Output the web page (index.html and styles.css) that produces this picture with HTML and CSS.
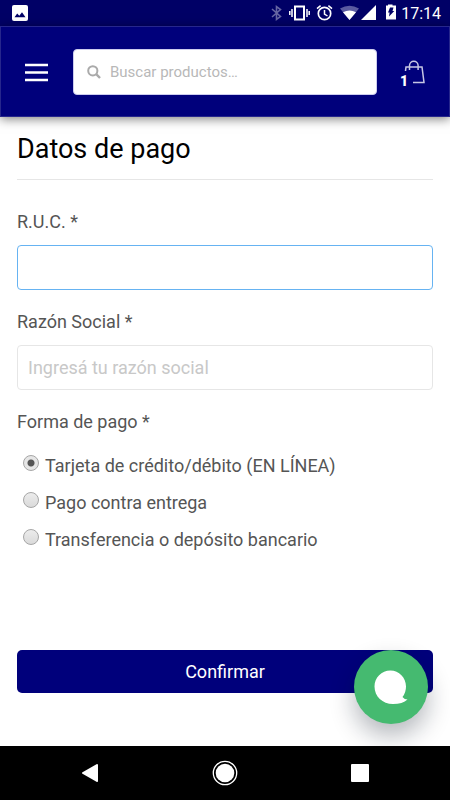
FILE: index.html
```html
<!DOCTYPE html>
<html lang="es">
<head>
<meta charset="utf-8">
<meta name="viewport" content="width=device-width, initial-scale=1">
<title>Datos de pago</title>
<link rel="stylesheet" href="styles.css">
</head>
<body>
<div class="status">
  <svg class="status-picture" width="16" height="16" viewBox="0 0 16 16"><rect width="16" height="16" rx="2" fill="#fff"/><path d="M2.5 12.3 5.2 8.6 7.3 10.8 10 7.2 13.5 12.3Z" fill="#000066"/></svg>
  <div class="status-icons">
    <svg width="126" height="18" viewBox="0 0 126 18" fill="none">
      <path d="M1 5 9.500 12.500 5.500 15.500V2.500L9.500 5.500 1 13" stroke="#6666a3" stroke-width="1.600"/>
      <rect x="24" y="2.500" width="9" height="13" stroke="#fff" stroke-width="2"/>
      <path d="M21 5v8M36 5v8M18.800 7v4M38.200 7v4" stroke="#fff" stroke-width="1.500"/>
      <circle cx="53.500" cy="9.500" r="6.200" stroke="#fff" stroke-width="1.700"/>
      <path d="M53.500 6v4l3 2M46 4.600l3.600-3M61 4.600l-3.600-3" stroke="#fff" stroke-width="1.500"/>
      <path d="M69 4.500Q78.500-1 88 4.500L78.500 16Z" fill="#5b5ba0"/>
      <path d="M72 8.300Q78.500 4.700 85 8.300L78.500 16Z" fill="#fff"/>
      <path d="M90 16 105 1V16Z" fill="#fff"/>
      <path d="M117 .5h4.500V1.500h3.500v14h-10v-14h2Z" fill="#fff"/>
      <path d="M119 3.500h3.500l-1 3.500h1.800L118 12.500l.6-4H117Z" fill="#000066"/>
    </svg>
    <span>17:14</span>
  </div>
</div>
<header class="header">
  <button class="icon-button" type="button" aria-label="Menú">
    <svg width="24" height="20" viewBox="0 0 24 20"><path d="M0 3h23M0 10.500h23M0 18h23" stroke="#fff" stroke-width="2.400"/></svg>
  </button>
  <form class="search">
    <svg width="14" height="14" viewBox="0 0 14 14" fill="none" stroke="#aaa" stroke-width="2"><circle cx="5.800" cy="5.800" r="4.600"/><path d="m9.200 9.200 3.800 3.800" stroke-width="2.400"/></svg>
    <input class="search-input" type="search" aria-label="Buscar productos" placeholder="Buscar productos…">
  </form>
  <button class="icon-button" type="button" aria-label="Carrito">
    <svg width="24" height="26" viewBox="0 0 24 26" fill="none" stroke="#c6c6e4" stroke-width="1.500"><path d="M4.500 12 5 8H21L23 23.500H12"/><path d="M8.500 11V6.500a4.300 4.300 0 0 1 8.600 0V11"/></svg>
    <span class="cart-count">1</span>
  </button>
</header>
<main class="page">
  <h1 class="title">Datos de pago</h1>
  <form class="form">
    <div class="field">
      <label class="label" for="ruc">R.U.C. *</label>
      <input class="input input-active" id="ruc" type="text">
    </div>
    <div class="field">
      <label class="label" for="razon">Razón Social *</label>
      <input class="input" id="razon" type="text" placeholder="Ingresá tu razón social">
    </div>
    <fieldset class="options">
      <legend class="label">Forma de pago *</legend>
      <label class="option"><input class="radio" type="radio" name="pago" checked>Tarjeta de crédito/débito (EN LÍNEA)</label>
      <label class="option"><input class="radio" type="radio" name="pago">Pago contra entrega</label>
      <label class="option"><input class="radio" type="radio" name="pago">Transferencia o depósito bancario</label>
    </fieldset>
    <button class="submit" type="submit">Confirmar</button>
  </form>
  <button class="chat" type="button" aria-label="Chat">
    <svg width="34" height="34" viewBox="0 0 34 34"><path d="M16.500.5C25 .5 32 7.500 32 16.500Q32 22.500 28.500 27Q30.500 29.500 33.500 29.500Q28.500 34 19 34C8.500 34 .5 26.500 .5 16.500C.5 7.500 7.500.5 16.500.5Z" fill="#fff"/></svg>
  </button>
</main>
<nav class="navbar" aria-label="Sistema">
  <button class="icon-button" type="button" aria-label="Atrás"><svg width="18" height="20" viewBox="0 0 18 20"><path d="M16 2 2 10 16 18Z" fill="#fff" stroke="#fff" stroke-width="2" stroke-linejoin="round"/></svg></button>
  <button class="icon-button" type="button" aria-label="Inicio"><svg width="26" height="26" viewBox="0 0 26 26"><circle cx="13" cy="13" r="11.700" fill="none" stroke="#fff" stroke-width="1.300"/><circle cx="13" cy="13" r="9.300" fill="#fff"/></svg></button>
  <button class="icon-button" type="button" aria-label="Recientes"><svg width="18" height="18" viewBox="0 0 18 18"><rect width="18" height="18" rx="1" fill="#fff"/></svg></button>
</nav>
</body>
</html>
```

FILE: styles.css
```css
* {
  box-sizing: border-box;
}

body {
  margin: 0;
  min-height: 100vh;
  display: flex;
  flex-direction: column;
  background: #fff;
  color: #555;
  font-family: Roboto, "Liberation Sans", sans-serif;
  font-size: 18px;
}

svg {
  display: block;
}

input,
button {
  font: inherit;
}

.status {
  display: flex;
  align-items: center;
  justify-content: space-between;
  height: 26px;
  padding: 0 9px 0 12px;
  background: #000066;
  color: #fff;
  font-size: 16px;
}

.status-icons {
  display: flex;
  align-items: center;
  gap: 4px;
}

.header {
  display: flex;
  align-items: center;
  gap: 24px;
  height: 91px;
  padding: 0 24px;
  border: 1px solid #26268c;
  background: #00007b;
  box-shadow: 0 2px 10px rgba(0, 0, 0, 0.5);
}

.icon-button {
  position: relative;
  flex: none;
  padding: 0;
  border: 0;
  background: none;
}

.search {
  display: flex;
  flex: 1;
  align-items: center;
  gap: 9px;
  height: 46px;
  padding: 0 13px;
  border: 1px solid #ccccee;
  border-radius: 4px;
  background: #fff;
}

.search-input {
  flex: 1;
  min-width: 0;
  padding: 0;
  border: 0;
  outline: 0;
  background: none;
  font-size: 15px;
}

::placeholder {
  color: #c8c8c8;
  opacity: 1;
}

.search-input::placeholder {
  color: #b8b8b8;
}

.cart-count {
  position: absolute;
  bottom: -4px;
  left: -1px;
  color: #fff;
  font-size: 14px;
  font-weight: 900;
  line-height: 16px;
}

.page {
  position: relative;
  flex: 1;
  padding: 12px 17px 53px;
}

.title {
  margin: 0;
  padding-bottom: 10px;
  border-bottom: 1px solid #e6e6e6;
  color: #000;
  font-size: 27px;
  font-weight: 400;
  line-height: 40px;
}

.form {
  display: flex;
  flex-direction: column;
  gap: 20px;
  padding-top: 30px;
}

.field {
  display: flex;
  flex-direction: column;
  gap: 11px;
}

.label {
  padding: 0;
  line-height: 24px;
}

.input {
  width: 100%;
  height: 45px;
  padding: 0 10px;
  border: 1px solid #e6e6e6;
  border-radius: 4px;
  outline: 0;
  background: #fff;
}

.input-active {
  border-color: #66b3f2;
}

.options {
  min-width: 0;
  margin: 0;
  padding: 0;
  border: 0;
}

.options .label {
  margin-bottom: 13px;
}

.option {
  display: flex;
  align-items: center;
  gap: 6px;
  padding-left: 6px;
  line-height: 37px;
}

.radio {
  appearance: none;
  width: 16px;
  height: 16px;
  margin: 0 0 6px;
  border: 1px solid #a6a6a6;
  border-radius: 50%;
  background: linear-gradient(#ececec, #dadada);
}

.radio:checked {
  background: radial-gradient(circle, #555 3px, #e6e6e6 4px);
}

.submit {
  height: 43px;
  margin-top: 72px;
  border: 0;
  border-radius: 5px;
  background: #00007b;
  color: #fff;
}

.chat {
  position: absolute;
  right: 22px;
  bottom: 22px;
  display: grid;
  place-items: center;
  width: 74px;
  height: 74px;
  padding: 0;
  border: 0;
  border-radius: 50%;
  background: #45ba70;
  box-shadow: 0 12px 24px rgba(10, 20, 35, 0.3);
}

.navbar {
  position: relative;
  display: grid;
  grid-template-columns: repeat(3, 30%);
  justify-content: center;
  place-items: center;
  height: 54px;
  background: #000;
}
```
